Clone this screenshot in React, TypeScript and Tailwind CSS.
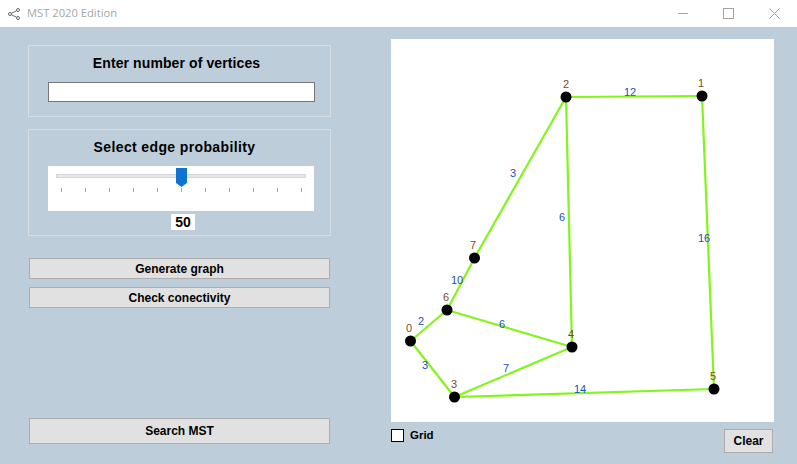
const vertices = [
  { id: "2", x: 566, y: 97, lx: 566, ly: 88 },
  { id: "1", x: 702, y: 96, lx: 701, ly: 87 },
  { id: "7", x: 474.5, y: 258, lx: 473, ly: 249 },
  { id: "6", x: 447, y: 310, lx: 446, ly: 301 },
  { id: "0", x: 410.5, y: 341, lx: 409, ly: 332 },
  { id: "4", x: 572, y: 347, lx: 571, ly: 338 },
  { id: "3", x: 454.5, y: 397, lx: 454, ly: 388 },
  { id: "5", x: 714, y: 389, lx: 713, ly: 380 },
];

const edges = [
  { a: "2", b: "1", w: "12", x: 630, y: 96 },
  { a: "2", b: "7", w: "3", x: 513, y: 177 },
  { a: "2", b: "4", w: "6", x: 562, y: 221 },
  { a: "1", b: "5", w: "16", x: 704, y: 242 },
  { a: "7", b: "6", w: "10", x: 457, y: 284 },
  { a: "6", b: "0", w: "2", x: 421, y: 325 },
  { a: "6", b: "4", w: "6", x: 502, y: 328 },
  { a: "0", b: "3", w: "3", x: 425, y: 369 },
  { a: "3", b: "4", w: "7", x: 506, y: 372 },
  { a: "3", b: "5", w: "14", x: 580, y: 393 },
];

const ticks = [0, 1, 2, 3, 4, 5, 6, 7, 8, 9, 10];

function vertex(id: string) {
  return vertices.find((v) => v.id === id)!;
}

function GraphCanvas() {
  return (
    <svg viewBox="391 39 383 383" className="block h-[383px] w-[383px] bg-white">
      {edges.map((e) => (
        <line
          key={e.a + e.b}
          x1={vertex(e.a).x}
          y1={vertex(e.a).y}
          x2={vertex(e.b).x}
          y2={vertex(e.b).y}
          stroke="#84f51a"
          strokeWidth="2.2"
        />
      ))}
      {edges.map((e) => (
        <text
          key={"w" + e.a + e.b}
          x={e.x}
          y={e.y}
          textAnchor="middle"
          fontSize="11"
          fill="#1d4fc4"
        >
          {e.w}
        </text>
      ))}
      {vertices.map((v) => (
        <g key={v.id}>
          <circle cx={v.x} cy={v.y} r="5.5" fill="#000" />
          <text x={v.lx} y={v.ly} textAnchor="middle" fontSize="11" fill="#7a4a2a">
            {v.id}
          </text>
        </g>
      ))}
    </svg>
  );
}

function Button({ label, className }: { label: string; className: string }) {
  return (
    <button
      className={`border border-[#adadad] bg-[#e1e1e1] text-[12px] font-bold text-black ${className}`}
    >
      {label}
    </button>
  );
}

export default function App() {
  return (
    <div className="flex h-[464px] w-[797px] flex-col overflow-hidden bg-[#bdcdda] font-['Liberation_Sans',sans-serif] text-black">
      <div className="flex h-[27px] items-center bg-white pl-[8px]">
        <svg width="12" height="12" viewBox="0 0 12 12" fill="none" stroke="#5f6b73" strokeWidth="1">
          <circle cx="10" cy="2" r="1.5" />
          <circle cx="2" cy="6" r="1.5" />
          <circle cx="10" cy="10" r="1.5" />
          <path d="M3.3 5.3 8.7 2.7M3.3 6.7l5.4 2.6" />
        </svg>
        <span className="ml-[7px] font-['Open_Sans',sans-serif] text-[11.2px] text-[#a3a8a8]">
          MST 2020 Edition
        </span>
        <div className="ml-auto flex items-center">
          <div className="h-px w-[10px] bg-[#a89f9f]" />
          <div className="ml-[35px] h-[11px] w-[11px] border border-[#a89f9f]" />
          <svg className="mr-[17px] ml-[35px]" width="11" height="11" viewBox="0 0 11 11" stroke="#a89f9f" strokeWidth="1">
            <path d="M.5.5l10 10M10.5.5l-10 10" />
          </svg>
        </div>
      </div>

      <div className="flex flex-1">
        <div className="flex w-[391px] flex-col pt-[18px] pl-[28px]">
          <div className="flex h-[72px] w-[303px] flex-col items-center border border-[#d6dee4] pt-[8px]">
            <h2 className="mr-[6px] text-[14px] leading-[18px] font-bold tracking-[0.1px]">Enter number of vertices</h2>
            <input className="mt-[10px] ml-[4px] h-[20px] w-[267px] border border-[#767676] bg-white" />
          </div>

          <div className="mt-[12px] flex h-[107px] w-[303px] flex-col items-center border border-[#d6dee4] pt-[8px]">
            <h2 className="mr-[10px] text-[14px] leading-[18px] font-bold tracking-[0.37px]">Select edge probability</h2>
            <div className="relative mt-[10px] ml-[2px] h-[45px] w-[266px] bg-white px-[8px] pt-[8px]">
              <div className="h-[4px] w-[250px] border border-[#d6d6d6] bg-[#e7e7e7]" />
              <svg className="absolute top-[2px] left-[128px]" width="11" height="19" viewBox="0 0 11 19">
                <path d="M0 0h11v15l-5.5 4L0 15z" fill="#0f73d0" />
              </svg>
              <div className="mt-[10px] flex w-[246px] justify-between pl-[5px]">
                {ticks.map((t) => (
                  <div key={t} className="h-[4px] w-px bg-[#a8a8a8]" />
                ))}
              </div>
            </div>
            <div className="mt-[3px] ml-[7px] flex h-[16px] w-[24px] items-center justify-center bg-white text-[14px] font-bold">
              50
            </div>
          </div>

          <div className="mt-[22px] flex w-[303px] flex-col gap-[8px] px-px">
            <Button label="Generate graph" className="h-[21px] w-full" />
            <Button label="Check conectivity" className="h-[21px] w-full" />
          </div>
          <div className="mt-[110px] w-[303px] px-px">
            <Button label="Search MST" className="h-[26px] w-full" />
          </div>
        </div>

        <div className="flex w-[383px] flex-col pt-[12px]">
          <GraphCanvas />
          <div className="mt-[7px] flex items-start justify-between">
            <div className="flex items-center">
              <div className="h-[13px] w-[13px] border border-black bg-white" />
              <span className="ml-[6px] text-[11.5px] leading-[13px] font-bold">Grid</span>
            </div>
            <Button label="Clear" className="mr-px h-[24px] w-[49px]" />
          </div>
        </div>
      </div>
    </div>
  );
}
